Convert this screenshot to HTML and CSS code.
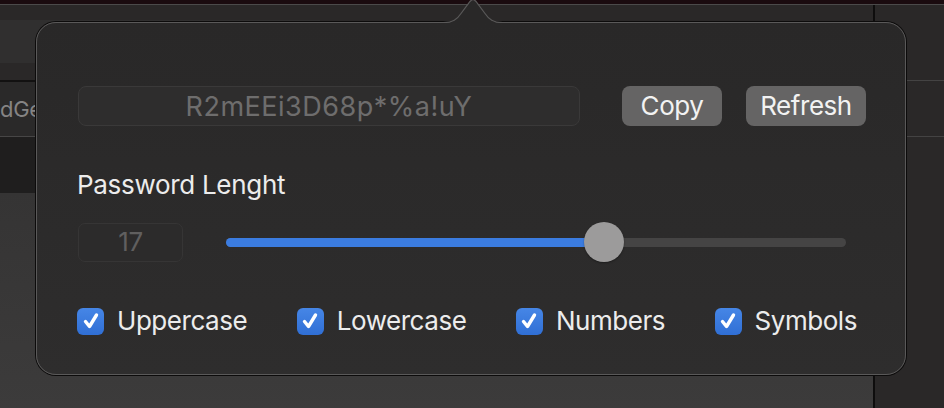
FILE: index.html
```html
<!DOCTYPE html>
<html>
<head>
<meta charset="utf-8">
<link rel="stylesheet" href="styles.css">
</head>
<body>
<div class="desk">
  <div class="titlebar"></div>
  <div class="toolbar">
    <div class="tb-left"><div class="tb-band"></div></div>
    <div class="tb-right"></div>
  </div>
  <div class="tabrow">
    <div class="tab-left"><span class="tab-text">dGe</span></div>
    <div class="tab-right"></div>
  </div>
  <div class="lower">
    <div class="lower-left"></div>
    <div class="lower-right"></div>
  </div>

  <div class="popover">
    <svg class="arrow" width="60" height="26" viewBox="0 0 60 26">
      <path class="arrow-fill" d="M0,24 C10,24 14,21 18,15 L27,3 Q30,-0.5 33,3 L42,15 C46,21 50,24 60,24 Z"/>
      <path class="arrow-line" d="M0,23.5 C10,23.5 14,20.5 18,14.5 L27,2.5 Q30,-1 33,2.5 L42,14.5 C46,20.5 50,23.5 60,23.5"/>
    </svg>
    <div class="row-top">
      <div class="pw-field">R2mEEi3D68p*%a!uY</div>
      <button class="btn btn-copy">Copy</button>
      <button class="btn btn-refresh">Refresh</button>
    </div>
    <div class="len-label">Password Lenght</div>
    <div class="row-slider">
      <div class="num-field">17</div>
      <div class="slider">
        <div class="track">
          <div class="fill" style="width:378px"></div>
        </div>
        <div class="knob" style="left:358px"></div>
      </div>
    </div>
    <div class="row-checks">
      <label class="check"><span class="box"><svg width="26" height="26" viewBox="0 0 26 26"><path d="M7.5 13.5 L11.5 18.5 L18.5 7" /></svg></span>Uppercase</label>
      <label class="check"><span class="box"><svg width="26" height="26" viewBox="0 0 26 26"><path d="M7.5 13.5 L11.5 18.5 L18.5 7" /></svg></span>Lowercase</label>
      <label class="check"><span class="box"><svg width="26" height="26" viewBox="0 0 26 26"><path d="M7.5 13.5 L11.5 18.5 L18.5 7" /></svg></span>Numbers</label>
      <label class="check"><span class="box"><svg width="26" height="26" viewBox="0 0 26 26"><path d="M7.5 13.5 L11.5 18.5 L18.5 7" /></svg></span>Symbols</label>
    </div>
  </div>
</div>
</body>
</html>
```

FILE: styles.css
```css
* { box-sizing: border-box; }
html, body { margin: 0; padding: 0; background: #2a2828; }
body { font-family: Inter, "Noto Sans", sans-serif; }

.desk {
  position: relative;
  width: 944px;
  height: 408px;
  overflow: hidden;
  display: flex;
  flex-direction: column;
  background: #2a2828;
}

.titlebar {
  height: 5px;
  background: #1a0b0f;
  border-bottom: 1px solid #4b4a4a;
}

.toolbar {
  height: 75px;
  display: flex;
}
.tb-left {
  width: 873px;
  padding-top: 15px;
  background: #2a2828;
}
.tb-band {
  width: 320px;
  height: 43px;
  background: #302f2f;
}
.tb-right {
  flex: 1;
  border-left: 2px solid #0e0d0d;
  background: #2a2828;
}

.tabrow {
  height: 57px;
  display: flex;
}
.tab-left {
  width: 873px;
  border-top: 2px solid #121111;
  border-bottom: 1px solid #474646;
  background: #2a2929;
  display: flex;
  align-items: center;
}
.tab-text {
  font-size: 22px;
  color: #858484;
  letter-spacing: -0.3px;
}
.tab-right {
  flex: 1;
  border-top: 1px solid #444343;
  border-bottom: 1px solid #444343;
  background: #2a2828;
}

.lower {
  flex: 1;
  display: flex;
}
.lower-left {
  width: 873px;
  background: linear-gradient(to bottom, #1f1e1e 0, #1f1e1e 56px, #353434 56px, #3c3b3b 100%);
}
.lower-right {
  flex: 1;
  border-left: 2px solid #0e0d0d;
  background: #2a2828;
}

/* Popover */
.popover {
  position: absolute;
  left: 36px;
  top: 22px;
  width: 870px;
  height: 353px;
  border: 1px solid #5a5959;
  border-radius: 20px;
  box-shadow: 0 0 0 1px #0c0b0b;
  background: linear-gradient(to bottom, #292828, #2e2d2d);
  padding: 63px 39px 0 41px;
  color: #ececec;
  font-size: 26px;
  letter-spacing: -0.45px;
}
.arrow {
  position: absolute;
  left: 406px;
  top: -24px;
  overflow: visible;
}
.arrow-fill { fill: #292828; }
.arrow-line { fill: none; stroke: #5a5959; stroke-width: 1.2; }

.row-top {
  display: flex;
  align-items: center;
  height: 40px;
}
.pw-field {
  width: 502px;
  height: 40px;
  margin-right: 42px;
  border: 1px solid #3a3939;
  border-radius: 8px;
  background: #2e2d2d;
  color: #6e6d6d;
  display: flex;
  align-items: center;
  justify-content: center;
  line-height: 1;
  font-size: 27px;
  letter-spacing: 0.5px;
}
.btn {
  height: 40px;
  border: none;
  border-radius: 8px;
  background: #656464;
  color: #f2f2f2;
  font-family: inherit;
  font-size: 26px;
  letter-spacing: -0.45px;
  padding: 0;
  line-height: 1;
}
.btn-copy { width: 100px; margin-right: 24px; }
.btn-refresh { width: 120px; }

.len-label {
  margin-top: 44px;
  height: 30px;
  line-height: 30px;
  margin-left: -1px;
  font-size: 26px;
  letter-spacing: -0.3px;
}

.row-slider {
  margin-top: 22px;
  display: flex;
  align-items: center;
  height: 40px;
}
.num-field {
  width: 105px;
  height: 39px;
  border: 1px solid #363535;
  border-radius: 7px;
  background: #2c2b2b;
  color: #605f5f;
  display: flex;
  align-items: center;
  justify-content: center;
  line-height: 1;
}
.slider {
  position: relative;
  margin-left: 43px;
  width: 620px;
  height: 40px;
  display: flex;
  align-items: center;
}
.track {
  width: 620px;
  height: 9px;
  border-radius: 5px;
  background: #454444;
  overflow: hidden;
}
.fill {
  height: 100%;
  background: #3b7ce0;
}
.knob {
  position: absolute;
  top: 0;
  width: 40px;
  height: 40px;
  border-radius: 50%;
  background: #9c9b9b;
  box-shadow: 0 1px 2px rgba(0,0,0,0.35);
}

.row-checks {
  margin-top: 45px;
  margin-left: -1px;
  margin-right: 9px;
  display: flex;
  justify-content: space-between;
  align-items: center;
  height: 28px;
}
.check {
  display: flex;
  align-items: center;
  gap: 13px;
  line-height: 1;
  color: #ececec;
}
.box {
  width: 27px;
  height: 27px;
  border-radius: 6px;
  background: linear-gradient(to bottom, #4686e6, #306fd5);
  display: flex;
  align-items: center;
  justify-content: center;
}
.box svg path {
  fill: none;
  stroke: #ffffff;
  stroke-width: 3.4;
  stroke-linecap: round;
  stroke-linejoin: round;
}
```
